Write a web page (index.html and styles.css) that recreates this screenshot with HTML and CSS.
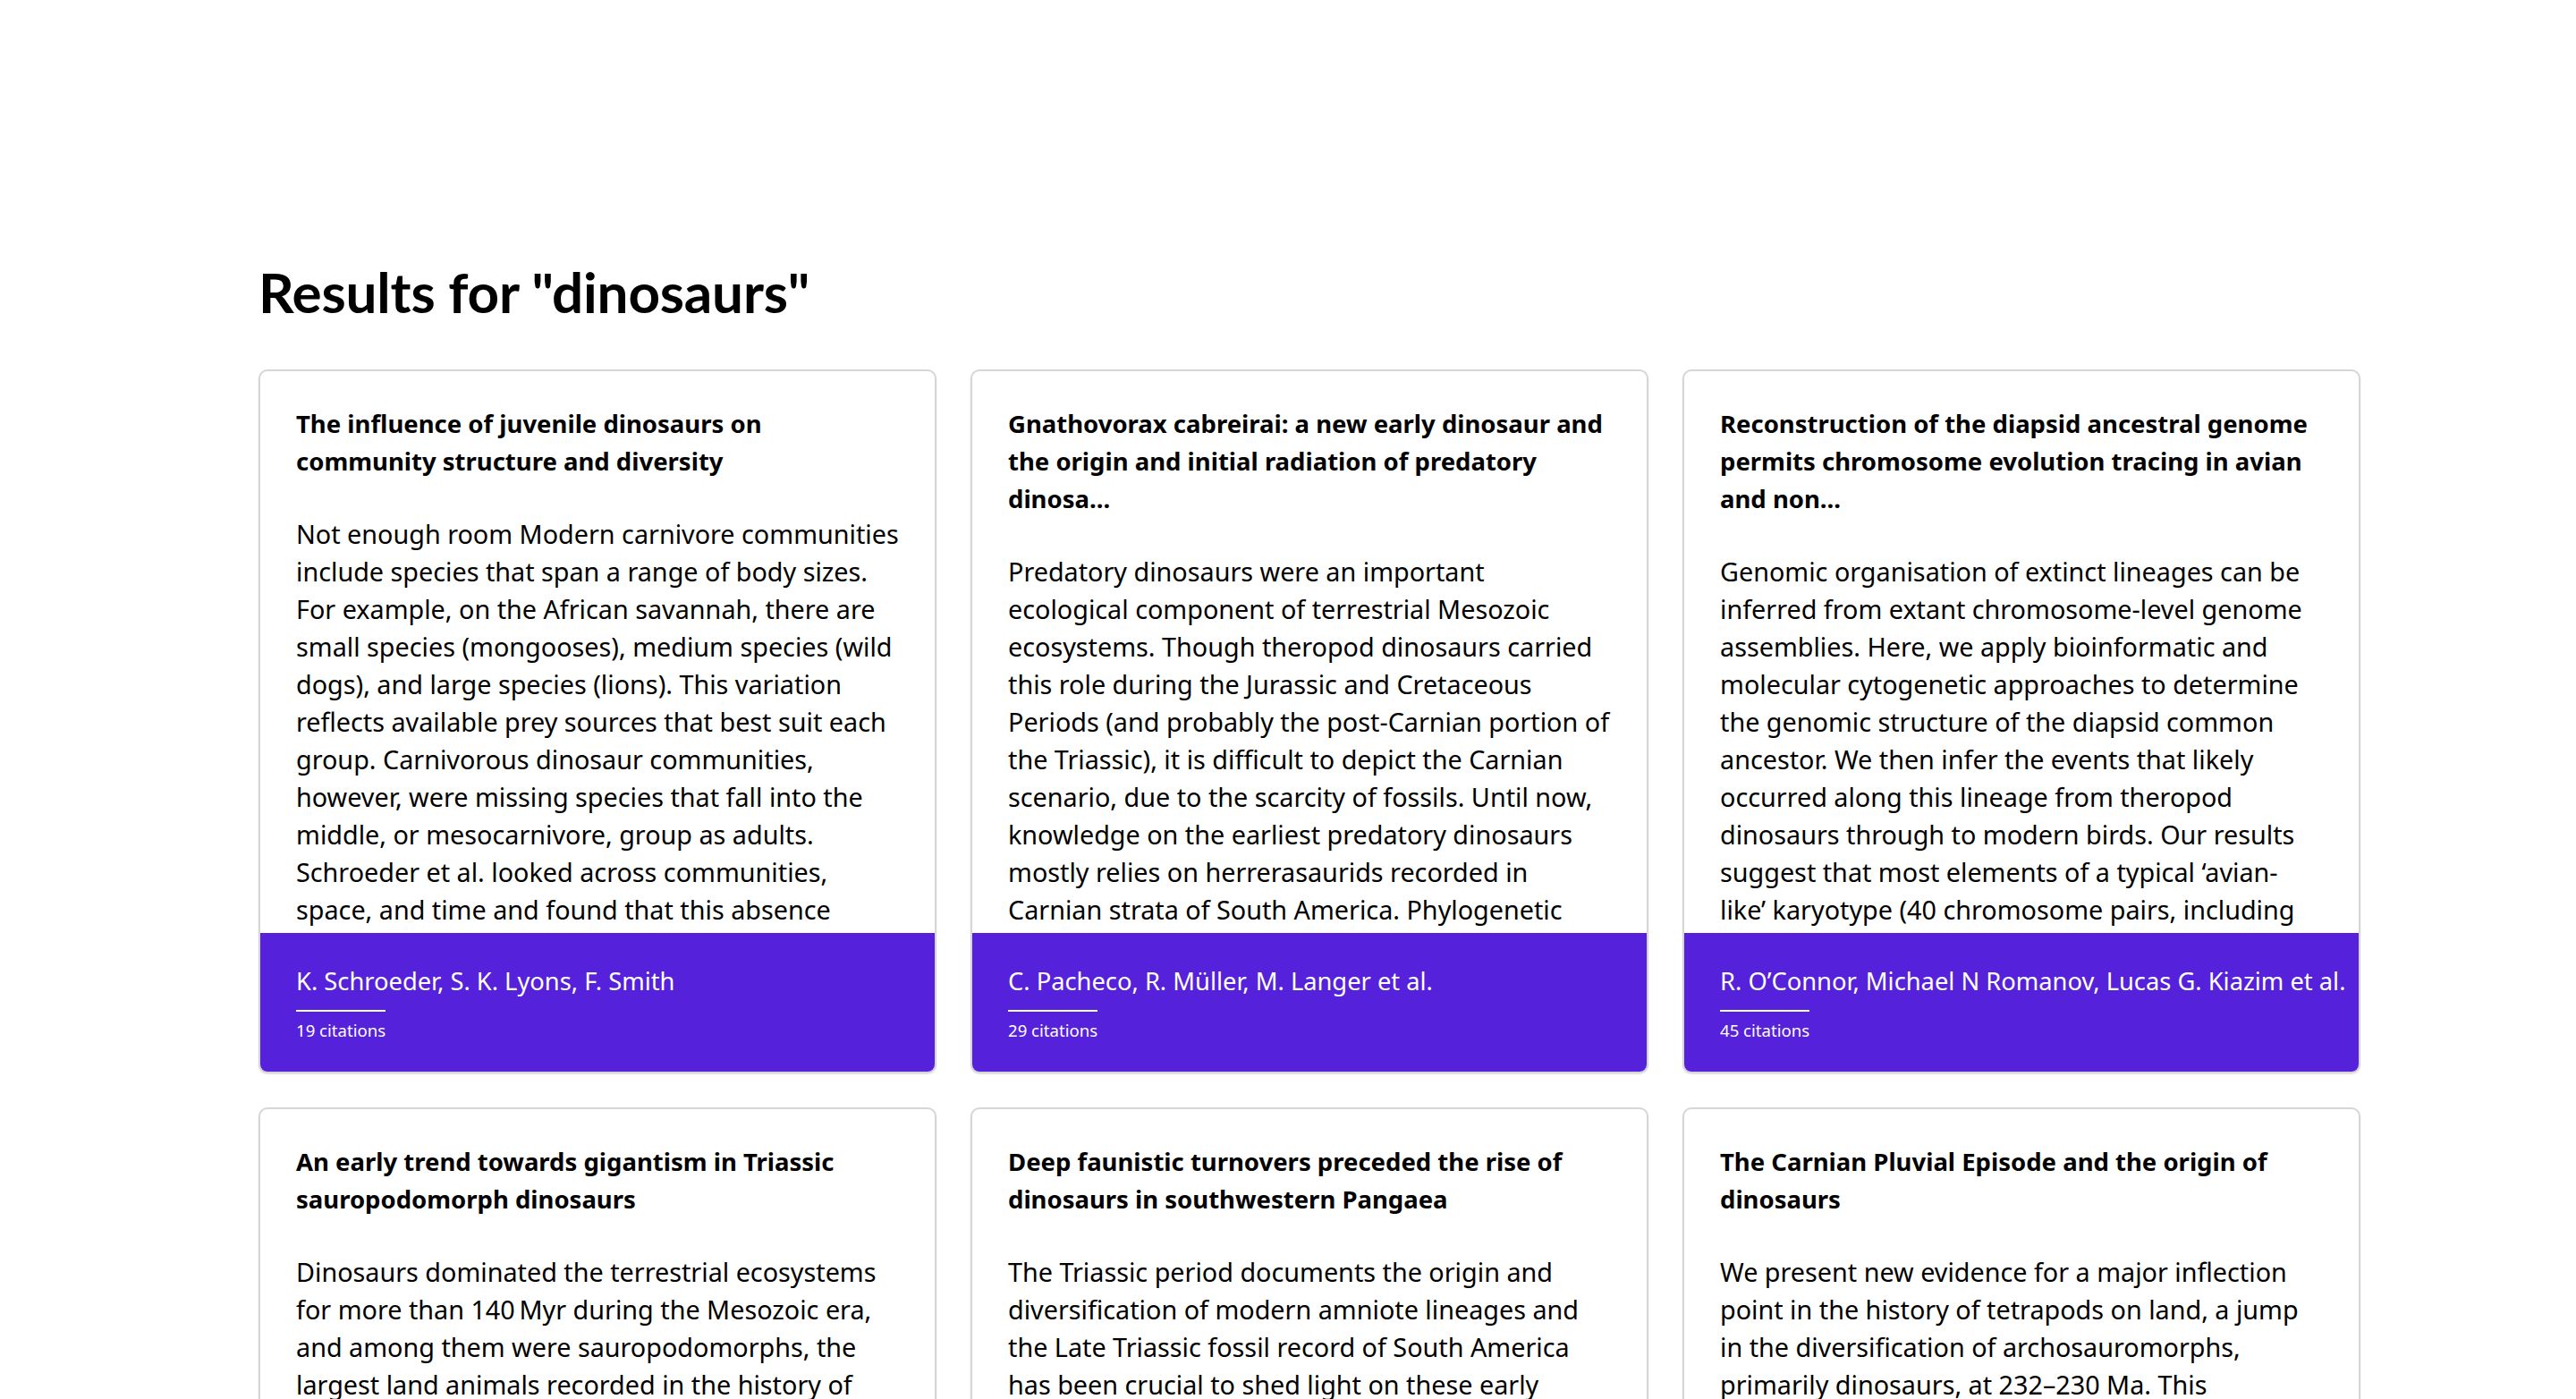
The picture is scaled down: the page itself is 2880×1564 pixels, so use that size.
FILE: index.html
```html
<!DOCTYPE html>
<html lang="en">
<head>
<meta charset="utf-8">
<title>Results for "dinosaurs"</title>
<link rel="stylesheet" href="styles.css">
</head>
<body>
<main class="page">
  <h1 class="results-title">Results for "dinosaurs"</h1>
  <section class="grid">
    <article class="card">
      <div class="card-body">
        <h2 class="card-title">The influence of juvenile dinosaurs on community structure and diversity</h2>
        <p class="card-abstract">Not enough room Modern carnivore communities include species that span a range of body sizes. For example, on the African savannah, there are small species (mongooses), medium species (wild dogs), and large species (lions). This variation reflects available prey sources that best suit each group. Carnivorous dinosaur communities, however, were missing species that fall into the middle, or mesocarnivore, group as adults. Schroeder et al. looked across communities, space, and time and found that this absence resulted from juveniles of megatheropods filling the mesocarnivore niche.</p>
      </div>
      <footer class="card-footer">
        <div class="card-authors">K. Schroeder, S. K. Lyons, F. Smith</div>
        <div class="card-rule"></div>
        <div class="card-citations">19 citations</div>
      </footer>
    </article>

    <article class="card">
      <div class="card-body">
        <h2 class="card-title">Gnathovorax cabreirai: a new early dinosaur and the origin and initial radiation of predatory dinosa...</h2>
        <p class="card-abstract">Predatory dinosaurs were an important ecological component of terrestrial Mesozoic ecosystems. Though theropod dinosaurs carried this role during the Jurassic and Cretaceous Periods (and probably the post-Carnian portion of the Triassic), it is difficult to depict the Carnian scenario, due to the scarcity of fossils. Until now, knowledge on the earliest predatory dinosaurs mostly relies on herrerasaurids recorded in Carnian strata of South America. Phylogenetic analyses recover the new taxon within Herrerasauridae.</p>
      </div>
      <footer class="card-footer">
        <div class="card-authors">C. Pacheco, R. Müller, M. Langer et al.</div>
        <div class="card-rule"></div>
        <div class="card-citations">29 citations</div>
      </footer>
    </article>

    <article class="card">
      <div class="card-body">
        <h2 class="card-title">Reconstruction of the diapsid ancestral genome permits chromosome evolution tracing in avian and non...</h2>
        <p class="card-abstract">Genomic organisation of extinct lineages can be inferred from extant chromosome-level genome assemblies. Here, we apply bioinformatic and molecular cytogenetic approaches to determine the genomic structure of the diapsid common ancestor. We then infer the events that likely occurred along this lineage from theropod dinosaurs through to modern birds. Our results suggest that most elements of a typical ‘avian-like’ karyotype (40 chromosome pairs, including microchromosomes) were in place before the divergence of birds and turtles.</p>
      </div>
      <footer class="card-footer">
        <div class="card-authors">R. O’Connor, Michael N Romanov, Lucas G. Kiazim et al.</div>
        <div class="card-rule"></div>
        <div class="card-citations">45 citations</div>
      </footer>
    </article>

    <article class="card">
      <div class="card-body">
        <h2 class="card-title">An early trend towards gigantism in Triassic sauropodomorph dinosaurs</h2>
        <p class="card-abstract">Dinosaurs dominated the terrestrial ecosystems for more than 140&#8201;Myr during the Mesozoic era, and among them were sauropodomorphs, the largest land animals recorded in the history of life. Early sauropodomorphs were small bipeds, and it was long believed that giant quadrupedal forms evolved only in the Jurassic.</p>
      </div>
      <footer class="card-footer">
        <div class="card-authors">C. Apaldetti, R. Martínez, D. Pol et al.</div>
        <div class="card-rule"></div>
        <div class="card-citations">31 citations</div>
      </footer>
    </article>

    <article class="card">
      <div class="card-body">
        <h2 class="card-title">Deep faunistic turnovers preceded the rise of dinosaurs in southwestern Pangaea</h2>
        <p class="card-abstract">The Triassic period documents the origin and diversification of modern amniote lineages and the Late Triassic fossil record of South America has been crucial to shed light on these early stages of dinosaur evolution and the faunal turnovers that preceded them.</p>
      </div>
      <footer class="card-footer">
        <div class="card-authors">M. Ezcurra, F. Montefeltro, R. Butler</div>
        <div class="card-rule"></div>
        <div class="card-citations">27 citations</div>
      </footer>
    </article>

    <article class="card">
      <div class="card-body">
        <h2 class="card-title">The Carnian Pluvial Episode and the origin of dinosaurs</h2>
        <p class="card-abstract">We present new evidence for a major inflection point in the history of tetrapods on land, a jump in the diversification of archosauromorphs, primarily dinosaurs, at 232–230 Ma. This diversification coincided with a time of substantial floral and faunal turnover during the Carnian Pluvial Episode.</p>
      </div>
      <footer class="card-footer">
        <div class="card-authors">M. Benton, M. Bernardi, C. Kinsella</div>
        <div class="card-rule"></div>
        <div class="card-citations">52 citations</div>
      </footer>
    </article>
  </section>
</main>
</body>
</html>
```
FILE: styles.css
```css
html, body {
  margin: 0;
  padding: 0;
  background: #ffffff;
}

body {
  font-family: "Noto Sans", "Open Sans", sans-serif;
  color: #000000;
}

.page {
  padding: 289px 0 80px 289px;
  width: 2350px;
}

.results-title {
  margin: 0 0 50px 0;
  font-family: "Lato", "Noto Sans", sans-serif;
  font-size: 62px;
  line-height: 74px;
  font-weight: 700;
  letter-spacing: -0.2px;
}

.grid {
  display: grid;
  grid-template-columns: repeat(3, 758px);
  column-gap: 38px;
  row-gap: 38px;
}

.card {
  box-sizing: border-box;
  height: 787px;
  border: 2px solid #d6d6d6;
  border-radius: 10px;
  box-shadow: 0 1px 2px rgba(0, 0, 0, 0.12);
  background: #ffffff;
  display: flex;
  flex-direction: column;
  overflow: hidden;
}

.card-body {
  flex: 1 1 auto;
  min-height: 0;
  overflow: hidden;
  padding: 38px 40px 0 40px;
}

.card-title {
  margin: 0 0 39px 0;
  font-size: 27.5px;
  line-height: 42px;
  font-weight: 700;
}

.card-abstract {
  margin: 0;
  font-size: 28.75px;
  line-height: 42px;
  font-weight: 400;
}

.card-footer {
  flex: 0 0 auto;
  background: #5521db;
  color: #ffffff;
  padding: 34px 40px 32px 40px;
}

.card-authors {
  font-size: 27.3px;
  line-height: 40px;
  white-space: nowrap;
}

.card-rule {
  width: 100px;
  height: 2px;
  background: #ffffff;
  margin: 12px 0 7px 0;
}

.card-citations {
  font-size: 18.6px;
  line-height: 28px;
}
```
